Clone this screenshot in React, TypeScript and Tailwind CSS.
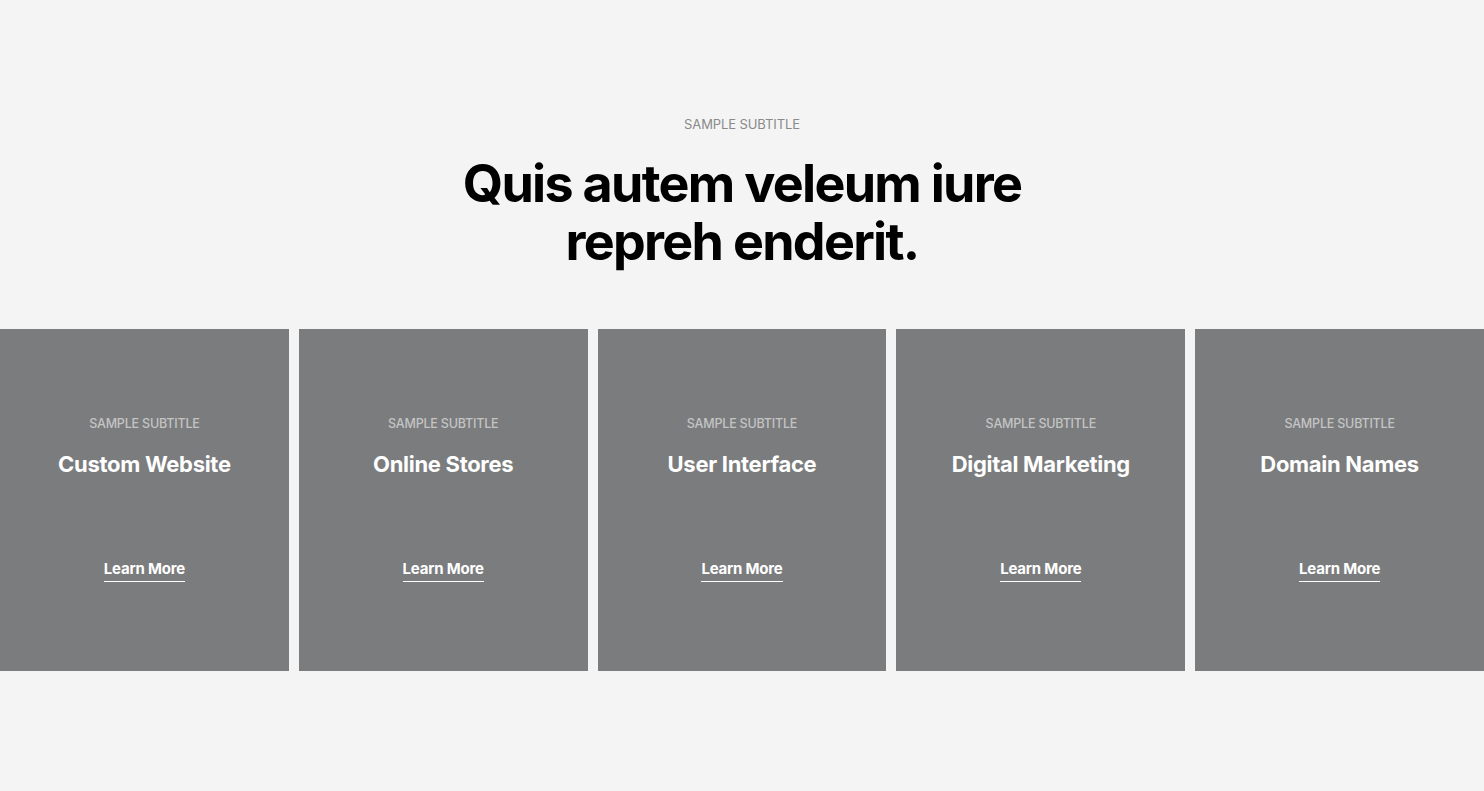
import React from 'react';

const services = ['Custom Website', 'Online Stores', 'User Interface', 'Digital Marketing', 'Domain Names'];

const ServiceCard: React.FC<{ title: string }> = ({ title }) => (
  <div className="flex h-[342px] flex-col items-center bg-[#7b7c7e] pt-[87px] text-center">
    <span className="text-[12.5px] font-medium leading-[16px] tracking-[-0.2px] text-[#c4c4c4]">SAMPLE SUBTITLE</span>
    <h3 className="mt-[18px] text-[22px] font-bold leading-[28px] tracking-[-0.3px] text-white">{title}</h3>
    <a href="#" className="mt-[81px] border-b border-white pb-[2px] text-[15px] font-bold leading-[20px] tracking-[-0.2px] text-white">
      Learn More
    </a>
  </div>
);

export default function App() {
  return (
    <div className="min-h-[791px] bg-[#f4f4f4] font-['Inter','Liberation_Sans',sans-serif]">
      <div className="flex flex-col items-center pt-[116px] text-center">
        <span className="text-[13px] leading-[16px] tracking-[-0.1px] text-[#8a8a8a]">SAMPLE SUBTITLE</span>
        <h1 className="mt-[23px] w-[620px] text-[52px] font-bold leading-[58px] tracking-[-1.7px] text-black">
          Quis autem veleum iure repreh enderit.
        </h1>
      </div>
      <div className="mt-[58px] grid grid-cols-5 gap-[10px]">
        {services.map((s) => (
          <ServiceCard key={s} title={s} />
        ))}
      </div>
    </div>
  );
}
